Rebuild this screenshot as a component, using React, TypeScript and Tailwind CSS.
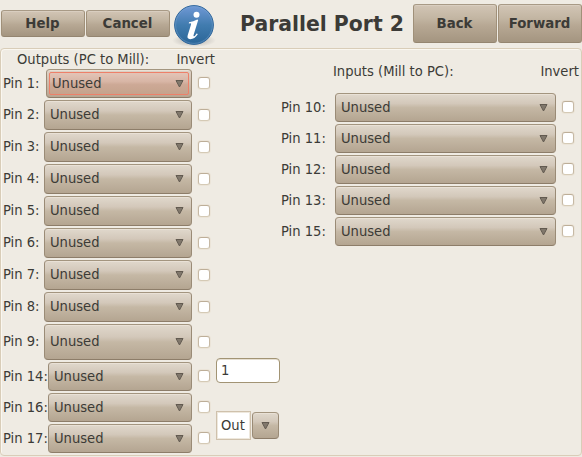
const FACE =
  'rounded-[4px] border border-t-[#a3957f] border-x-[#9a8b76] border-b-[#8d7d69] shadow-[inset_0_1px_0_#e9e1d6]';
const COMBO_FILL = 'bg-[linear-gradient(#e0d8cc_0%,#d3c8ba_35%,#c5b8a5_50%,#b4a591_100%)]';

function Arrow() {
  return (
    <svg width="9" height="9" viewBox="0 0 9 9" className="shrink-0">
      <path d="M1 1.5H8L4.5 8Z" fill="#81786c" stroke="#625a50" strokeWidth="1" />
    </svg>
  );
}

function ToolButton({ label, size }: { label: string; size: string }) {
  return (
    <button
      className={`w-[84px] shrink-0 rounded-[3px] border border-t-[#a89a86] border-x-[#a09079] border-b-[#948570] bg-[linear-gradient(#d2c5b5_0%,#c3b6a3_35%,#b7a894_55%,#a49580_100%)] pr-[1px] text-center text-[13.33px] leading-none font-bold shadow-[inset_0_1px_0_#d9cec0] ${size}`}
    >
      {label}
    </button>
  );
}

function InfoIcon() {
  return (
    <svg width="46" height="46" viewBox="0 0 46 46" className="shrink-0">
      <defs>
        <linearGradient id="disc" x1="0" y1="0" x2="0" y2="1">
          <stop offset="0" stopColor="#7199d6" />
          <stop offset="0.5" stopColor="#417caf" />
          <stop offset="1" stopColor="#2a6597" />
        </linearGradient>
        <radialGradient id="ground">
          <stop offset="0" stopColor="#777" stopOpacity="0.55" />
          <stop offset="1" stopColor="#777" stopOpacity="0" />
        </radialGradient>
      </defs>
      <ellipse cx="23" cy="38.5" rx="22" ry="6.5" fill="url(#ground)" />
      <circle cx="23" cy="23" r="19.4" fill="url(#disc)" stroke="#2f669b" />
      <circle cx="23" cy="23" r="18.4" fill="none" stroke="#80a9d5" strokeOpacity="0.4" />
      <circle cx="25.5" cy="12.7" r="3" fill="#fff" />
      <path
        d="M18 20.2Q22.5 19.8 26.2 17.6L27.2 18L22.6 33Q22.2 34.5 23 34.3Q24 34 25.6 31.4L26.9 32Q23.7 37.2 19.2 37.2Q15.6 37 16.7 33.3L19.9 23Q20.5 21.4 19.6 21.3L17.8 21.4Z"
        fill="#fff"
      />
    </svg>
  );
}

type ComboProps = { size: string; focused?: boolean; inset?: string };

function Combo({ size, focused = false, inset = '' }: ComboProps) {
  return (
    <div
      className={`shrink-0 ${FACE} ${size} ${
        focused ? 'bg-[linear-gradient(#dfd2c6,#b9a591)] p-[2px]' : `${COMBO_FILL} pr-[7px] pl-[5px]`
      } flex items-center`}
    >
      <div
        className={
          focused
            ? 'flex h-full w-full items-center justify-between rounded-[2px] border border-[#ee8069] bg-[linear-gradient(#e3c4b7_0%,#d8b6a6_40%,#cda996_55%,#c5a38d_100%)] pr-[4px] pl-[2px]'
            : `flex w-full items-center justify-between ${inset}`
        }
      >
        <span className="pb-px leading-4">Unused</span>
        <Arrow />
      </div>
    </div>
  );
}

function Check({ shift = '' }: { shift?: string }) {
  return (
    <span
      className={`block h-3 w-3 shrink-0 rounded-[3px] border border-t-[#bdae98] border-x-[#c6b9a5] border-b-[#d5cab5] bg-white shadow-[0_0_0_1px_#ebe4d8] ${shift}`}
    />
  );
}

const outputs = [
  { pin: 1, label: 'w-[43px] pb-px', size: 'h-[29px] w-[146px]', inset: '', shift: 'mb-px' },
  ...[2, 3, 4, 5, 6, 7, 8].map((pin) => ({
    pin,
    label: 'w-[41px] pb-[2px]',
    size: 'h-[30px] w-[148px]',
    inset: 'pb-px',
    shift: '',
  })),
  { pin: 9, label: 'w-[41px] pb-[2px]', size: 'h-[36px] w-[148px]', inset: 'pb-px', shift: '' },
  ...[14, 16, 17].map((pin) => ({
    pin,
    label: 'w-[45px] pb-px',
    size: 'h-[29px] w-[144px]',
    inset: '',
    shift: 'mb-px',
  })),
];

export default function App() {
  return (
    <main className="h-[457px] w-[582px] overflow-hidden bg-[#efebe3] font-['DejaVu_Sans_Condensed','DejaVu_Sans',sans-serif] text-[14.6px] leading-none whitespace-nowrap text-[#3c3b37] [font-stretch:condensed]">
      <header className="flex h-12 items-start pl-[1px] font-['DejaVu_Sans',sans-serif] [font-stretch:normal]">
        <div className="flex gap-[1px] pt-[10px]">
          <ToolButton label="Help" size="h-[27px]" />
          <ToolButton label="Cancel" size="h-[27px]" />
        </div>
        <div className="ml-[1px] flex w-[46px] pt-[2px]">
          <InfoIcon />
        </div>
        <h1 className="w-[196px] pt-[14px] pl-[23px] text-[20.4px] leading-5 font-bold">Parallel Port 2</h1>
        <div className="flex gap-[1px] pt-[4px]">
          <ToolButton label="Back" size="h-[39px]" />
          <ToolButton label="Forward" size="h-[39px]" />
        </div>
      </header>
      <section className="flex h-[408px] w-[582px] rounded-[4px] border border-[#d9cdb8] shadow-[inset_1px_1px_0_#faf7f0]">
        <div className="w-[215px] shrink-0 pl-[2px]">
          <div className="flex h-5 items-center justify-between pr-[1px] pl-[14px]">
            <span>Outputs (PC to Mill):</span>
            <span>Invert</span>
          </div>
          <div className="flex flex-col gap-[2px]">
            {outputs.map((o) => (
              <div key={o.pin} className="flex items-center">
                <span className={`leading-4 ${o.label}`}>Pin {o.pin}:</span>
                <Combo size={o.size} focused={o.pin === 1} inset={o.inset} />
                <span className="w-[6px]" />
                <Check shift={o.shift} />
              </div>
            ))}
          </div>
        </div>
        <div className="w-[65px] shrink-0 pt-[309px]">
          <div className="flex h-[25px] w-16 items-center rounded-[4px] border border-[#a29474] bg-white pl-[4px] shadow-[inset_0_1px_0_#e6dfd2]">
            1
          </div>
          <div className="mt-[28px] flex items-center gap-[1px]">
            <div className="flex h-[29px] w-[35px] items-center border border-[#cfc1ac] bg-white pl-[4px] shadow-[inset_0_0_0_1px_#eee8dd]">
              Out
            </div>
            <div className={`flex h-[27px] w-[27px] items-center justify-center ${FACE} ${COMBO_FILL}`}>
              <Arrow />
            </div>
          </div>
        </div>
        <div className="w-[299px] shrink-0 pt-[14px]">
          <div className="flex h-4 items-center justify-between pr-[1px] pl-[52px]">
            <span>Inputs (Mill to PC):</span>
            <span>Invert</span>
          </div>
          <div className="mt-[14px] flex flex-col gap-[2px]">
            {[10, 11, 12, 13, 15].map((pin) => (
              <div key={pin} className="flex items-center">
                <span className="w-[54px] pb-px leading-4">Pin {pin}:</span>
                <Combo size="h-[29px] w-[221px]" />
                <span className="w-[6px]" />
                <Check shift="mb-px" />
              </div>
            ))}
          </div>
        </div>
      </section>
    </main>
  );
}
